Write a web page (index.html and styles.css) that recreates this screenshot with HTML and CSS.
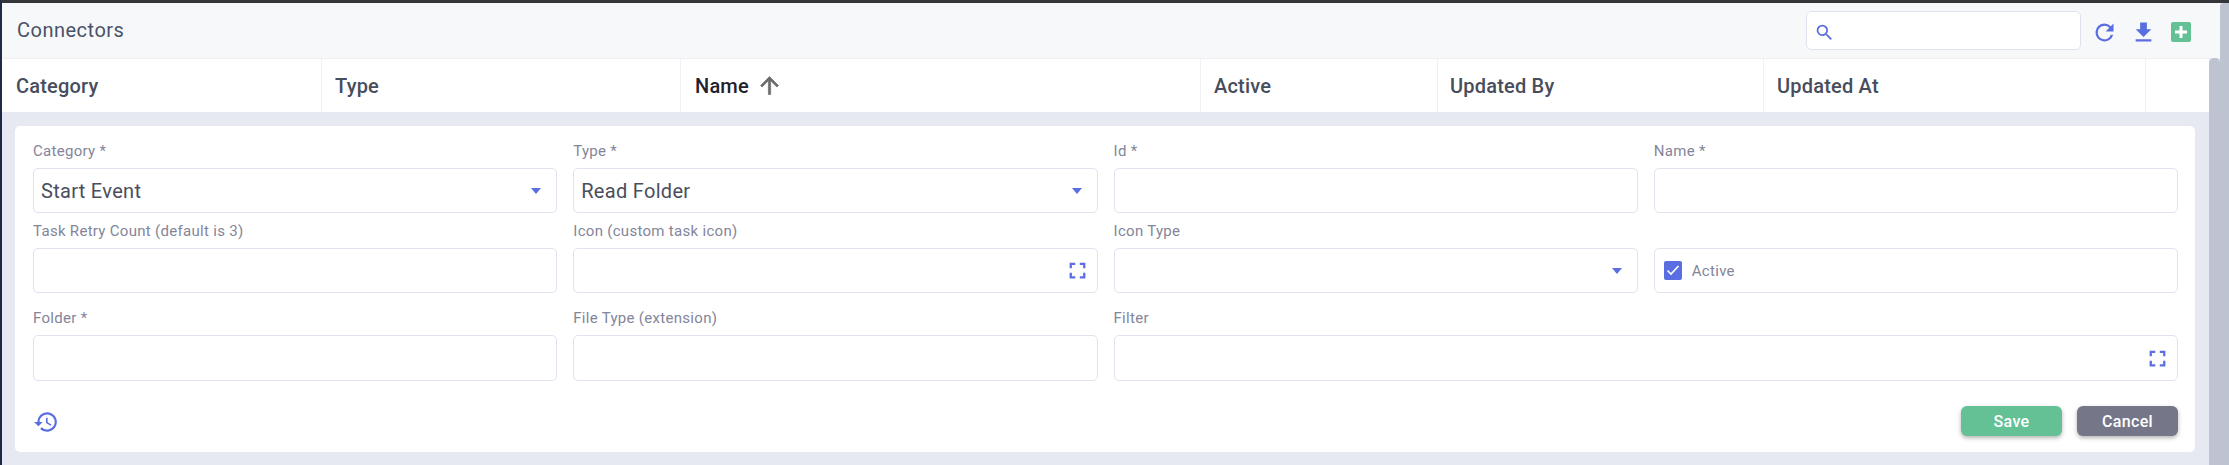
FILE: index.html
```html
<!DOCTYPE html>
<html lang="en">
<head>
    <meta charset="UTF-8">
    <meta name="viewport" content="width=device-width, initial-scale=1.0">
    <title>Connectors</title>
    <link rel="stylesheet" href="styles.css">
</head>
<body>

    <div class="frame">
        <div class="content">
            <!-- Title bar -->
            <div class="topbar">
                <span class="title">Connectors</span>
                <div class="search">
                    <svg class="icon-search" viewBox="0 0 24 24"><path d="M15.5 14h-.79l-.28-.27A6.47 6.47 0 0 0 16 9.5 6.5 6.5 0 1 0 9.5 16c1.61 0 3.09-.59 4.23-1.57l.27.28v.79l5 4.99L20.49 19l-4.99-5zm-6 0C7.01 14 5 11.99 5 9.5S7.01 5 9.5 5 14 7.01 14 9.5 11.99 14 9.5 14z"/></svg>
                </div>
                <div class="tools">
                    <svg class="tool" viewBox="0 0 24 24"><path d="M17.65 6.35A7.96 7.96 0 0 0 12 4a8 8 0 1 0 7.73 10h-2.08A6 6 0 1 1 12 6c1.66 0 3.14.69 4.22 1.78L13 11h7V4l-2.35 2.35z"/></svg>
                    <svg class="tool" viewBox="0 0 24 24"><path d="M19 9h-4V3H9v6H5l7 7 7-7zM5 18v2h14v-2H5z"/></svg>
                    <span class="add-btn"><svg viewBox="0 0 20 20"><path d="M8.5 4h3v4.500H16v3h-4.500V16h-3v-4.500H4v-3h4.500z"/></svg></span>
                </div>
            </div>

            <div class="body-row">
                <div class="main">
                    <!-- Table header -->
                    <div class="table-head">
                        <div class="th col-category">Category</div>
                        <div class="th col-type">Type</div>
                        <div class="th col-name sorted">Name
                            <svg class="sort-arrow" viewBox="0 0 24 24"><path d="M4 12l1.410 1.410L11 7.830V20h2V7.830l5.580 5.590L20 12l-8-8-8 8z"/></svg>
                        </div>
                        <div class="th col-active">Active</div>
                        <div class="th col-by">Updated By</div>
                        <div class="th col-at">Updated At</div>
                        <div class="th col-end"></div>
                    </div>

                    <!-- Edit form -->
                    <div class="card">
                        <div class="fields">
                            <div class="field">
                                <label>Category *</label>
                                <div class="input big">Start Event<span class="caret"></span></div>
                            </div>
                            <div class="field">
                                <label>Type *</label>
                                <div class="input big">Read Folder<span class="caret"></span></div>
                            </div>
                            <div class="field">
                                <label>Id *</label>
                                <div class="input"></div>
                            </div>
                            <div class="field">
                                <label>Name *</label>
                                <div class="input"></div>
                            </div>

                            <div class="field">
                                <label>Task Retry Count (default is 3)</label>
                                <div class="input"></div>
                            </div>
                            <div class="field">
                                <label>Icon (custom task icon)</label>
                                <div class="input">
                                    <svg class="expand" viewBox="0 0 24 24"><path d="M7 14H5v5h5v-2H7v-3zm-2-4h2V7h3V5H5v5zm12 7h-3v2h5v-5h-2v3zM14 5v2h3v3h2V5h-5z"/></svg>
                                </div>
                            </div>
                            <div class="field">
                                <label>Icon Type</label>
                                <div class="input"><span class="caret"></span></div>
                            </div>
                            <div class="field">
                                <label>&nbsp;</label>
                                <div class="input check-box">
                                    <span class="check"><svg viewBox="0 0 18 18"><path d="M3.500 9.500l3.500 3.500 7.500-8" /></svg></span>
                                    <span class="check-label">Active</span>
                                </div>
                            </div>

                            <div class="field last-row">
                                <label>Folder *</label>
                                <div class="input tall"></div>
                            </div>
                            <div class="field last-row">
                                <label>File Type (extension)</label>
                                <div class="input tall"></div>
                            </div>
                            <div class="field last-row wide">
                                <label>Filter</label>
                                <div class="input tall">
                                    <svg class="expand" viewBox="0 0 24 24"><path d="M7 14H5v5h5v-2H7v-3zm-2-4h2V7h3V5H5v5zm12 7h-3v2h5v-5h-2v3zM14 5v2h3v3h2V5h-5z"/></svg>
                                </div>
                            </div>
                        </div>

                        <div class="actions">
                            <svg class="history" viewBox="0 0 24 24"><path d="M13 3a9 9 0 0 0-9 9H1l3.890 3.890.07.140L9 12H6a7 7 0 1 1 2.050 4.950l-1.420 1.420A9 9 0 1 0 13 3zm-1 5v5l4.280 2.540.72-1.210-3.500-2.080V8H12z"/></svg>
                            <div class="buttons">
                                <button class="btn save">Save</button>
                                <button class="btn cancel">Cancel</button>
                            </div>
                        </div>
                    </div>
                </div>
                <div class="inner-scroll"></div>
            </div>
        </div>
        <div class="outer-scroll"></div>
    </div>

</body>
</html>
```

FILE: styles.css
```css
/* General Styles */
html, body {
    margin: 0;
    padding: 0;
    height: 100%;
    overflow: hidden;
}

body {
    font-family: 'Roboto', sans-serif;
    background-color: #e6e9f1;
    box-sizing: border-box;
    border-top: 3px solid #34363a;
    border-left: 2px solid #1f2a44;
}

.frame {
    display: flex;
    height: 462px;
}

.content {
    flex: 1;
    display: flex;
    flex-direction: column;
    min-width: 0;
}

.outer-scroll {
    width: 9px;
    background-color: #bdc3d0;
    border-radius: 4px 0 0 0;
}

/* Title bar */
.topbar {
    height: 55px;
    flex-shrink: 0;
    display: flex;
    align-items: center;
    background-color: #f7f8fa;
    padding-left: 15px;
    padding-right: 29px;
    box-sizing: border-box;
}

.title {
    flex: 1;
    font-size: 20px;
    color: #4a5268;
    letter-spacing: 0.5px;
    margin-top: -1px;
}

.search {
    width: 275px;
    height: 39px;
    box-sizing: border-box;
    background-color: #fff;
    border: 1px solid #e0e3ee;
    border-radius: 5px;
    display: flex;
    align-items: center;
    padding-left: 7px;
}

.icon-search {
    width: 21px;
    height: 21px;
    fill: #5b6ee1;
    margin-top: 3px;
}

.tools {
    display: flex;
    align-items: center;
    gap: 12px;
    margin-left: 10px;
    margin-top: 3px;
}

.tool {
    width: 27px;
    height: 27px;
    fill: #5b6ee1;
}

.add-btn {
    width: 20px;
    height: 20px;
    background-color: #63c195;
    border-radius: 2px;
    display: block;
    margin-left: 2px;
}

.add-btn svg {
    display: block;
    fill: #fff;
}

.body-row {
    flex: 1;
    display: flex;
    min-height: 0;
}

.main {
    flex: 1;
    min-width: 0;
}

.inner-scroll {
    width: 11px;
    background-color: #bdc3d0;
    border-radius: 5px 5px 0 0;
}

/* Table header */
.table-head {
    display: flex;
    height: 54px;
    background-color: #fff;
    box-sizing: border-box;
    border-top: 1px solid #eef0f4;
}

.th {
    display: flex;
    align-items: center;
    box-sizing: border-box;
    padding-left: 13px;
    font-size: 20px;
    font-weight: 500;
    color: #474d5c;
    border-right: 1px solid #eef0f4;
    letter-spacing: 0.2px;
}

.col-category { width: 320px; padding-left: 14px; }
.col-type { width: 359px; }
.col-name { width: 520px; padding-left: 14px; }
.col-active { width: 237px; }
.col-by { width: 326px; padding-left: 12px; }
.col-at { width: 382px; }
.col-end { flex: 1; border-right: none; }

.sorted {
    color: #1f222b;
}

.sort-arrow {
    width: 27px;
    height: 27px;
    fill: #6b6b6b;
    stroke: #6b6b6b;
    stroke-width: 0.6;
    margin-left: 7px;
}

/* Form card */
.card {
    margin: 14px 14px 0 13px;
    height: 326px;
    box-sizing: border-box;
    background-color: #fff;
    border-radius: 5px;
    padding: 16px 17px 0 18px;
}

.fields {
    display: grid;
    grid-template-columns: repeat(4, 1fr);
    column-gap: 16px;
    row-gap: 0;
}

.field label {
    display: block;
    height: 26px;
    line-height: 18px;
    font-size: 15px;
    color: #84859a;
    letter-spacing: 0.3px;
}

.field.last-row {
    margin-top: 7px;
}

.field.wide {
    grid-column: span 2;
}

.input {
    height: 45px;
    box-sizing: border-box;
    background-color: #fff;
    border: 1px solid #e0e3ee;
    border-radius: 5px;
    display: flex;
    align-items: center;
    padding: 0 7px;
    margin-bottom: 9px;
}

.input.tall {
    height: 46px;
}

.input.big {
    font-size: 20px;
    color: #4a4e5c;
    letter-spacing: 0.3px;
}

/* Little down arrow in the select boxes */
.caret {
    margin-left: auto;
    margin-right: 8px;
    width: 0;
    height: 0;
    border-left: 5.5px solid transparent;
    border-right: 5.5px solid transparent;
    border-top: 6px solid #5b6ee1;
}

.expand {
    margin-left: auto;
    margin-right: -1px;
    width: 27px;
    height: 27px;
    fill: #5b6ee1;
}

.check {
    width: 18px;
    height: 19px;
    background-color: #5b6ee1;
    border-radius: 2px;
    display: block;
    margin-left: 2px;
}

.check svg {
    display: block;
    fill: none;
    stroke: #fff;
    stroke-width: 1.6;
}

.check-label {
    margin-left: 10px;
    font-size: 15px;
    color: #84859a;
    letter-spacing: 0.3px;
}

/* Bottom row */
.actions {
    display: flex;
    align-items: center;
    justify-content: space-between;
    margin-top: 16px;
}

.history {
    width: 26px;
    height: 26px;
    fill: #5b6ee1;
    margin-top: 2px;
}

.buttons {
    display: flex;
    gap: 15px;
}

.btn {
    width: 101px;
    height: 30px;
    border: none;
    border-radius: 6px;
    color: #fff;
    font-family: 'Roboto', sans-serif;
    font-size: 16px;
    font-weight: 500;
    letter-spacing: 0.3px;
    box-shadow: 0 2px 4px rgba(0, 0, 0, 0.3);
}

.save {
    background-color: #63c195;
}

.cancel {
    background-color: #757789;
}
```
